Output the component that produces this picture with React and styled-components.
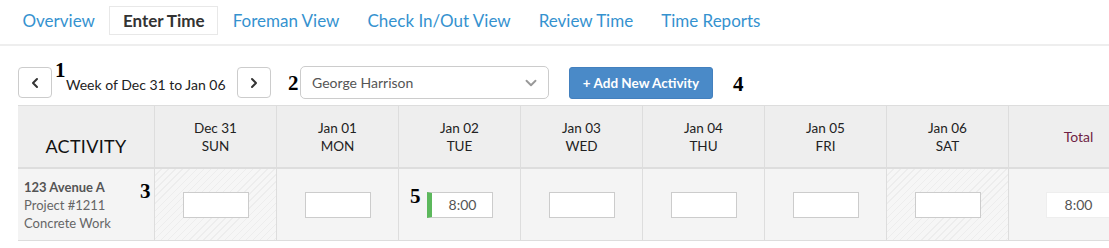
import React from 'react';
import styled, { createGlobalStyle } from 'styled-components';
import { ChevronLeft, ChevronRight, ChevronDown } from 'lucide-react';

const GlobalStyle = createGlobalStyle`
    body {
        margin: 0;
        background: #ffffff;
        font-family: Lato, "Open Sans", sans-serif;
        overflow: hidden;
    }
`;

const Page = styled.div`
    width: 1109px;
    height: 248px;
    overflow: hidden;
`;

const Tabs = styled.nav`
    display: flex;
    align-items: center;
    gap: 1px;
    height: 46px;
    padding-left: 9px;
    padding-bottom: 4px;
    box-sizing: border-box;
    border-bottom: 2px solid #eeeeee;
`;

const Tab = styled.div`
    font-size: 17px;
    line-height: 27px;
    padding: 0 12.5px;
    color: ${p => (p.$active ? '#333333' : '#3592cf')};
    font-weight: ${p => (p.$active ? 700 : 400)};
    border: 1px solid ${p => (p.$active ? '#e8e8e8' : 'transparent')};
`;

const Toolbar = styled.div`
    display: flex;
    align-items: center;
    height: 33px;
    margin: 20px 0 6px;
    padding-left: 18px;
`;

const Marker = styled.span`
    position: absolute;
    font-family: "Liberation Serif", serif;
    font-weight: 700;
    font-size: 21px;
    color: #000;
    line-height: 1;
`;

const NavButton = styled.button`
    width: 34px;
    height: 31px;
    display: flex;
    align-items: center;
    justify-content: center;
    padding: 0;
    background: #fff;
    border: 1px solid #cccccc;
    border-radius: 4px;
    color: #333;
`;

const WeekLabel = styled.div`
    position: relative;
    font-size: 14px;
    color: #222;
    width: 185px;
    padding-left: 14px;
    padding-top: 3px;
    box-sizing: border-box;
`;

const SelectWrap = styled.div`
    position: relative;
    margin-left: 29px;
`;

const Select = styled.div`
    width: 249px;
    height: 33px;
    box-sizing: border-box;
    border: 1px solid #cccccc;
    border-radius: 5px;
    display: flex;
    align-items: center;
    justify-content: space-between;
    padding: 0 8px 0 11px;
    font-size: 14px;
    color: #555;
`;

const AddButton = styled.button`
    position: relative;
    margin-left: 20px;
    width: 144px;
    height: 32px;
    background: #4a8ac8;
    border: 1px solid #4380be;
    border-radius: 3px;
    color: #fff;
    font-family: Lato, "Open Sans", sans-serif;
    font-weight: 700;
    font-size: 13.5px;
    padding: 0;
`;

const Grid = styled.div`
    display: grid;
    grid-template-columns: 137px repeat(7, 122px) 140px;
    margin-left: 18px;
    border-top: 1px solid #dddddd;
`;

const HeadCell = styled.div`
    background: #eeeeee;
    height: 61px;
    border-right: 1px solid #dddddd;
    border-bottom: 2px solid #dddddd;
    display: flex;
    flex-direction: column;
    align-items: center;
    justify-content: center;
    font-size: 13.5px;
    line-height: 18px;
    color: #222;
    box-sizing: content-box;
`;

const ActivityTitle = styled.span`
    font-size: 18px;
    letter-spacing: 0.3px;
    color: #111;
    margin-top: 18px;
`;

const TotalTitle = styled.span`
    color: #6e1f45;
    font-size: 14px;
`;

const BodyCell = styled.div`
    position: relative;
    height: 71px;
    border-right: 1px solid #dddddd;
    border-bottom: 1px solid #dddddd;
    background: ${p =>
        p.$weekend
            ? 'repeating-linear-gradient(135deg, #f6f6f6 0 4px, #ededed 4px 5px)'
            : '#f4f4f4'};
    display: flex;
    align-items: center;
    justify-content: ${p => (p.$left ? 'flex-start' : 'center')};
`;

const ActivityInfo = styled.div`
    padding-left: 6px;
    font-size: 13px;
    line-height: 18px;
    color: #666;

    b {
        color: #555;
    }
`;

const TimeInput = styled.div`
    width: 66px;
    height: 26px;
    box-sizing: border-box;
    background: #fff;
    border: 1px solid ${p => (p.$soft ? '#eeeeee' : '#cccccc')};
    border-left: ${p => (p.$filled ? '5px solid #5cb85c' : `1px solid ${p.$soft ? '#eeeeee' : '#cccccc'}`)};
    font-size: 14px;
    color: #555;
    display: flex;
    align-items: center;
    justify-content: center;
    padding-left: ${p => (p.$filled ? '2px' : '0')};
`;

const days = [
    { date: 'Dec 31', day: 'SUN', weekend: true },
    { date: 'Jan 01', day: 'MON' },
    { date: 'Jan 02', day: 'TUE', value: '8:00' },
    { date: 'Jan 03', day: 'WED' },
    { date: 'Jan 04', day: 'THU' },
    { date: 'Jan 05', day: 'FRI' },
    { date: 'Jan 06', day: 'SAT', weekend: true },
];

const tabs = ['Overview', 'Enter Time', 'Foreman View', 'Check In/Out View', 'Review Time', 'Time Reports'];

const App = () => {
    return (
        <Page>
            <GlobalStyle />
            <Tabs>
                {tabs.map(t => (
                    <Tab key={t} $active={t === 'Enter Time'}>{t}</Tab>
                ))}
            </Tabs>
            <Toolbar>
                <NavButton><ChevronLeft size={16} strokeWidth={3} /></NavButton>
                <WeekLabel>
                    <Marker style={{ left: 3, top: -13 }}>1</Marker>
                    Week of Dec 31 to Jan 06
                </WeekLabel>
                <NavButton><ChevronRight size={16} strokeWidth={3} /></NavButton>
                <SelectWrap>
                    <Marker style={{ left: -12, top: 7 }}>2</Marker>
                    <Select>
                        George Harrison
                        <ChevronDown size={18} color="#999" strokeWidth={2.5} />
                    </Select>
                </SelectWrap>
                <AddButton>
                    + Add New Activity
                    <Marker style={{ left: 163, top: 6 }}>4</Marker>
                </AddButton>
            </Toolbar>
            <Grid>
                <HeadCell><ActivityTitle>ACTIVITY</ActivityTitle></HeadCell>
                {days.map(d => (
                    <HeadCell key={d.date}>
                        <span>{d.date}</span>
                        <span>{d.day}</span>
                    </HeadCell>
                ))}
                <HeadCell><TotalTitle>Total</TotalTitle></HeadCell>

                <BodyCell $left>
                    <ActivityInfo>
                        <b>123 Avenue A</b><br />
                        Project #1211<br />
                        Concrete Work
                    </ActivityInfo>
                    <Marker style={{ left: 122, top: 12 }}>3</Marker>
                </BodyCell>
                {days.map(d => (
                    <BodyCell key={d.date} $weekend={d.weekend}>
                        {d.value && <Marker style={{ left: 11, top: 17 }}>5</Marker>}
                        <TimeInput $filled={!!d.value}>{d.value}</TimeInput>
                    </BodyCell>
                ))}
                <BodyCell>
                    <TimeInput $soft>8:00</TimeInput>
                </BodyCell>
            </Grid>
        </Page>
    );
};

export default App;
